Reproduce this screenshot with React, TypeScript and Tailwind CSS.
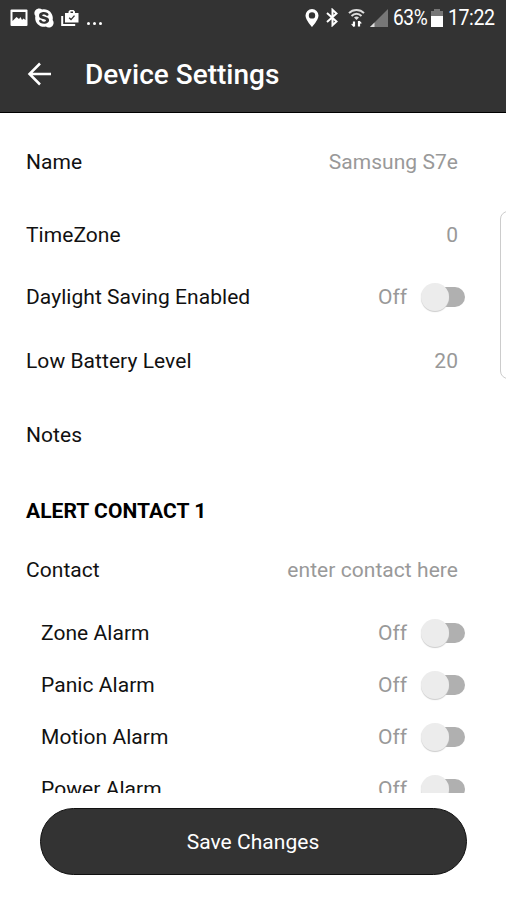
import { useState } from "react";
import { FaSkype } from "react-icons/fa";

const alarmList = ["Zone Alarm", "Panic Alarm", "Motion Alarm", "Power Alarm"];

const StatusBar = () => (
  <div className="h-[35px] flex items-center text-white">
    <svg className="ml-[10px] w-[18px] h-[18px]" viewBox="0 0 18 18">
      <rect x="0.5" y="0.5" width="17" height="16.5" rx="1" fill="#fff" />
      <path d="M2.500 3h13v8l-2-1.500-1.500 1.500-1.500-3-1.500 2-2.500-2-4 4z" fill="#333" />
    </svg>
    <FaSkype className="ml-[5px] w-[22px] h-[22px]" />
    <svg className="ml-[6px] w-[18px] h-[18px]" viewBox="0 0 18 18">
      <path d="M1.200 7v9h13" fill="none" stroke="#fff" strokeWidth="2" />
      <path d="M4 4h3.500v-1.500l1.500-1.500h3.500l1.500 1.500v1.500h3.500v9.500h-13.500z" fill="#fff" />
      <path d="M9.500 2.500h2.500v1.500h-2.500z" fill="#333" />
      <path d="M8.200 8.800l1.800 1.800 3.500-4" fill="none" stroke="#333" strokeWidth="1.400" />
    </svg>
    <span className="ml-[8px] flex gap-[3px] pt-3">
      <i className="size-[3px] rounded-full bg-white" />
      <i className="size-[3px] rounded-full bg-white" />
      <i className="size-[3px] rounded-full bg-white" />
    </span>

    <svg className="ml-auto w-[14px] h-[18px]" viewBox="0 0 14 18">
      <path
        d="M7 0a6.500 6.500 0 0 0-6.500 6.500c0 4.500 6.500 11.500 6.500 11.500s6.500-7 6.500-11.500a6.500 6.500 0 0 0-6.500-6.500zm0 3.200a3.200 3.200 0 1 1 0 6.400 3.200 3.200 0 0 1 0-6.400z"
        fill="#fff"
        fillRule="evenodd"
      />
    </svg>
    <svg className="ml-[7px] w-[12px] h-[19px]" viewBox="0 0 12 19" fill="none" stroke="#fff" strokeWidth="2">
      <path d="M1 5l9.500 8.500-4 3.700v-15.400l4 3.700-9.500 8.500" />
    </svg>
    <svg className="ml-[10px] w-[17px] h-[18px]" viewBox="0 0 17 18" fill="none" stroke="#ddd">
      <path d="M1 4.200c4-4.200 11-4.200 15 0" strokeWidth="1.900" />
      <path d="M3.500 7c3-3 7-3 10 0" strokeWidth="1.900" />
      <path d="M6 8.500c1.500-1.300 3.500-1.300 5 0l-2.500 2.500z" fill="#ddd" stroke="none" />
      <path d="M6 17.500v-5M11 12v5.500" stroke="#fff" strokeWidth="2.200" />
      <path d="M3.700 15l2.300 2.300M11 12.200l2.300 2.300" stroke="#fff" strokeWidth="1.200" />
    </svg>
    <svg className="ml-[5px] w-[18px] h-[18px]" viewBox="0 0 18 18">
      <path d="M18 0v18H0z" fill="#777" />
      <path d="M4.500 13.500v4.500H0z" fill="#ddd" />
    </svg>
    <span className="ml-[5px] w-[34px] text-[22px] leading-none tracking-[-0.5px] origin-left scale-x-[0.87]">63%</span>
    <svg className="ml-[4px] w-[12px] h-[18px]" viewBox="0 0 12 18">
      <path d="M3 0h6v2h3v5H0V2h3z" fill="#777" />
      <path d="M0 7h12v11H0z" fill="#fff" />
    </svg>
    <span className="ml-[5px] mr-[12px] w-[46px] text-[22px] leading-none tracking-[-0.5px] origin-left scale-x-[0.89]">17:22</span>
  </div>
);

const Switch = () => {
  const [on, setOn] = useState(false);

  return (
    <button
      role="switch"
      aria-checked={on}
      aria-label="Toggle"
      onClick={() => setOn(!on)}
      className="flex items-center"
    >
      <span className="w-[34px] text-left text-[#999]">{on ? "On" : "Off"}</span>
      <span className="relative ml-[11px] mr-[-7px] w-[42px] h-5 rounded-full bg-[#b0b0b0]">
        <span
          className={`absolute top-[-4px] size-7 rounded-full bg-[#ececec] shadow-[0_1px_1px_#ccc] ${
            on ? "right-0" : "left-[-2px]"
          }`}
        />
      </span>
    </button>
  );
};

const App = () => {
  return (
    <div className="relative h-[900px] w-[506px] flex flex-col overflow-hidden bg-white font-[Roboto,sans-serif] text-[21px] leading-7 tracking-[0.05px] text-[#111]">
      <header className="h-[113px] shrink-0 bg-[#333] border-b border-black">
        <StatusBar />
        <div className="flex items-center h-[77px] pl-[27px] text-white">
          <svg className="w-6 h-6" viewBox="0 0 24 24" fill="none" stroke="#fff" strokeWidth="2.500">
            <path d="M13 1.500L2.500 12l10.500 10.500M2.500 12h21.500" />
          </svg>
          <h1 className="ml-[34px] pt-[2px] text-[28px] font-medium tracking-[0px]">Device Settings</h1>
        </div>
      </header>

      <main className="h-[681px] -mt-px shrink-0 overflow-hidden pl-[26px] pr-[48px]">
        <div className="h-[99px] flex items-center justify-between">
          <span>Name</span>
          <span className="text-[#999]">Samsung S7e</span>
        </div>
        <div className="h-[48px] flex items-center justify-between">
          <span>TimeZone</span>
          <span className="text-[#999]">0</span>
        </div>
        <div className="h-[76px] flex items-center justify-between">
          <span>Daylight Saving Enabled</span>
          <Switch />
        </div>
        <div className="h-[52px] flex items-center justify-between">
          <span>Low Battery Level</span>
          <span className="text-[#999]">20</span>
        </div>
        <div className="h-24 flex items-center">Notes</div>
        <h2 className="h-14 flex items-center font-bold text-black">ALERT CONTACT 1</h2>
        <div className="h-[62px] flex items-center justify-between">
          <span>Contact</span>
          <span className="text-[#999]">enter contact here</span>
        </div>
        <ul className="mt-[6px] pl-[15px]">
          {alarmList.map((alarm) => (
            <li key={alarm} className="h-[52px] flex items-center justify-between">
              <span>{alarm}</span>
              <Switch />
            </li>
          ))}
        </ul>
      </main>

      <button className="mt-[15px] mx-auto w-[427px] h-[67px] rounded-full bg-[#333] border border-[#111] text-white">
        Save Changes
      </button>

      {/* edge panel handle */}
      <div className="absolute right-[-4px] top-[211px] w-[10px] h-[168px] rounded-l-[8px] border border-[#ccc]" />
    </div>
  );
};

export default App;
